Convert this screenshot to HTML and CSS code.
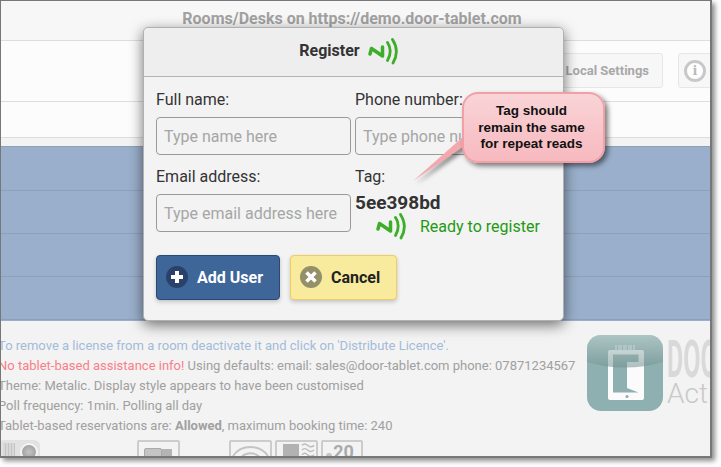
FILE: index.html
```html
<!DOCTYPE html>
<html lang="en">
<head>
    <meta charset="UTF-8">
    <meta name="viewport" content="width=device-width, initial-scale=1.0">
    <title>Register</title>
    <link rel="stylesheet" href="styles.css">
</head>
<body>
    <div class="shot">
        <header class="title-bar">Rooms/Desks on https://demo.door-tablet.com</header>
        <div class="toolbar">
            <span class="tool-btn">Local Settings</span>
            <span class="tool-btn info-btn"><span class="info-icon">i</span></span>
        </div>
        <div class="sub-bar"></div>
        <div class="table">
            <div class="table-row"></div>
            <div class="table-row"></div>
            <div class="table-row"></div>
            <div class="table-row"></div>
        </div>
        <div class="footer">
            <div class="notes">
                <p class="note-blue">To remove a license from a room deactivate it and click on 'Distribute Licence'.</p>
                <p><span class="note-red">No tablet-based assistance info!</span> Using defaults: email: sales@door-tablet.com phone: 07871234567</p>
                <p>Theme: Metalic. Display style appears to have been customised</p>
                <p>Poll frequency: 1min. Polling all day</p>
                <p>Tablet-based reservations are: <strong>Allowed</strong>, maximum booking time: 240</p>
                <div class="status-icons">
                    <span class="status-icon icon-switch"><i class="knob"></i></span>
                    <span class="status-icon icon-cam"><i class="cam-body"></i><i class="cam-lens"></i></span>
                    <span class="status-icon icon-wifi">
                        <svg width="39" height="20" viewBox="0 0 39 20" fill="none" stroke="#c4c4c4" stroke-width="2"><path d="M2 14C10 2 29 2 37 14M8 18C14 9 25 9 31 18"/></svg>
                    </span>
                    <span class="status-icon icon-heat">
                        <i class="heat-block"></i>
                        <svg width="16" height="18" viewBox="0 0 16 18" fill="none" stroke="#bbb" stroke-width="1.5"><path d="M1 3q3-3 6 0t7 0M1 8q3-3 6 0t7 0M1 13q3-3 6 0t7 0"/></svg>
                    </span>
                    <span class="status-icon icon-count"><i class="count-dot"></i>20</span>
                </div>
            </div>
            <div class="logo">
                <div class="logo-tile">
                    <svg width="76" height="76" viewBox="0 0 76 76">
                        <defs>
                            <linearGradient id="gloss" x1="0" y1="0" x2="0" y2="1">
                                <stop offset="0" stop-color="#c4d6d3" stop-opacity="0.55"/>
                                <stop offset="1" stop-color="#6f8f8f" stop-opacity="0.55"/>
                            </linearGradient>
                        </defs>
                        <rect x="21" y="15" width="36" height="50" rx="2" fill="#fbfbfb"/>
                        <path d="M29 10v5q1.500 2 3 0v-5M34 10v5q1.500 2 3 0v-5M39 10v5q1.500 2 3 0v-5M44 10v5q1.500 2 3 0v-5" fill="none" stroke="#f2f2f2" stroke-width="1"/>
                        <path d="M26 19.500H51.500V27H40V53L51.500 57.500H26Z" fill="#8fb0b0"/>
                        <circle cx="40" cy="61.500" r="1.500" fill="#8fb0b0"/>
                        <path d="M0 0H76V27Q38 38 0 27Z" fill="url(#gloss)"/>
                    </svg>
                </div>
                <div class="logo-text">
                    <span class="logo-door">DOOR</span>
                    <span class="logo-act">Activate</span>
                </div>
            </div>
        </div>
    </div>

    <div class="modal">
        <div class="modal-head">
            <span class="modal-title">Register</span>
            <svg class="nfc" width="32" height="27" viewBox="0 0 32 27" fill="none" stroke="#3dae2a" stroke-linecap="round" stroke-linejoin="round"><path d="M3 16L4.500 10.500L15.500 18L15.500 9" stroke-width="3.500"/><path d="M20.500 4.500Q26 13 20.500 22.500" stroke-width="2.800"/><path d="M25.500 1.500Q33 13 26 25" stroke-width="2.800"/></svg>
        </div>
        <form class="modal-body">
            <div class="form-grid">
                <div class="field">
                    <label for="fullName">Full name:</label>
                    <input type="text" id="fullName" placeholder="Type name here">
                </div>
                <div class="field">
                    <label for="phone">Phone number:</label>
                    <input type="text" id="phone" placeholder="Type phone number">
                </div>
                <div class="field">
                    <label for="email">Email address:</label>
                    <input type="text" id="email" placeholder="Type email address here">
                </div>
                <div class="field">
                    <label>Tag:</label>
                    <div class="tag-value">5ee398bd</div>
                    <div class="tag-status">
                        <svg class="nfc" width="32" height="27" viewBox="0 0 32 27" fill="none" stroke="#3dae2a" stroke-linecap="round" stroke-linejoin="round"><path d="M3 16L4.500 10.500L15.500 18L15.500 9" stroke-width="3.500"/><path d="M20.500 4.500Q26 13 20.500 22.500" stroke-width="2.800"/><path d="M25.500 1.500Q33 13 26 25" stroke-width="2.800"/></svg>
                        <span>Ready to register</span>
                    </div>
                </div>
            </div>
            <div class="actions">
                <button type="button" class="btn btn-add">
                    <svg class="btn-icon" width="22" height="22" viewBox="0 0 22 22"><circle cx="11" cy="11" r="11" fill="#2a426b"/><path d="M11 5v12M5 11h12" stroke="#fff" stroke-width="4"/></svg>
                    Add User
                </button>
                <button type="button" class="btn btn-cancel">
                    <svg class="btn-icon" width="22" height="22" viewBox="0 0 22 22"><circle cx="11" cy="11" r="11" fill="#94906a"/><path d="M6.500 6.500l9 9M15.500 6.500l-9 9" stroke="#fff" stroke-width="3.600"/></svg>
                    Cancel
                </button>
            </div>
        </form>
    </div>

    <div class="callout">
        <svg class="callout-tail" width="90" height="100" viewBox="0 0 90 100">
            <path d="M56 40.600L1 89L56 51.600Z" fill="#f4a8ae"/>
        </svg>
        <div class="callout-box">Tag should<br>remain the same<br>for repeat reads</div>
    </div>
</body>
</html>
```

FILE: styles.css
```css
* {
    box-sizing: border-box;
}
html, body {
    margin: 0;
    padding: 0;
}
body {
    width: 721px;
    height: 467px;
    overflow: hidden;
    position: relative;
    font-family: Roboto, Arial, sans-serif;
    background: #fff;
}
.shot {
    width: 712px;
    height: 458px;
    border: 1px solid #777;
    border-width: 1px 2px 2px 1px;
    overflow: hidden;
    background: #f3f3f3;
    box-shadow: 3px 3px 5px rgba(0, 0, 0, 0.45);
}
.title-bar {
    height: 40px;
    padding-top: 8px;
    padding-right: 7px;
    text-align: center;
    font-size: 16px;
    font-weight: 700;
    line-height: 19px;
    color: #a2a2a2;
    background: #f7f7f7;
    border-bottom: 1px solid #ddd;
}
.toolbar {
    height: 61px;
    padding: 12px 0 0;
    display: flex;
    justify-content: flex-end;
    gap: 15px;
    margin-right: -18px;
    background: #fcfcfc;
    border-bottom: 1px solid #ddd;
}
.tool-btn {
    height: 35px;
    padding: 0 13px 0 120px;
    display: flex;
    align-items: center;
    font-size: 13px;
    font-weight: 700;
    color: #a8a8a8;
    background: #f7f7f7;
    border: 1px solid #e6e6e6;
    border-radius: 3px;
}
.info-btn {
    width: 50px;
    padding: 0 0 0 5px;
}
.info-icon {
    width: 22px;
    height: 22px;
    display: block;
    text-align: center;
    font-family: "DejaVu Serif", serif;
    font-size: 13px;
    line-height: 16px;
    color: #bbb;
    background: #fff;
    border: 3px solid #c8c8c8;
    border-radius: 50%;
}
.sub-bar {
    height: 36px;
    background: #fcfcfc;
    border-bottom: 1px solid #ddd;
}
.table {
    margin-top: 8px;
    height: 175px;
    background: #9aafcb;
    border-top: 1px solid #8ba1b5;
}
.table-row {
    height: 43px;
    border-bottom: 1px solid #8ba1b5;
}
.table-row:first-child {
    height: 44px;
}
.footer {
    display: flex;
    padding-top: 15px;
    position: relative;
}
.notes {
    width: 586px;
    margin-left: -3px;
    font-size: 13px;
    line-height: 20px;
    color: #a0a0a0;
}
.notes p {
    margin: 0;
    white-space: nowrap;
}
.note-blue {
    color: #a3bbd9;
}
.note-red {
    color: #f97f86;
}
.status-icons {
    display: flex;
    margin-top: 4px;
    height: 30px;
}
.status-icon {
    display: block;
    height: 30px;
    flex: none;
    border: 2px solid #ccc;
    border-radius: 2px;
    position: relative;
}
.icon-switch {
    width: 42px;
    border: none;
    border-radius: 6px;
    background: repeating-linear-gradient(90deg, #d8d8d8 0 2px, #c4c4c4 2px 3px) 5px 3px / 12px 20px no-repeat, #e2e2e2;
}
.knob {
    position: absolute;
    left: 22px;
    top: 3px;
    width: 18px;
    height: 18px;
    border-radius: 50%;
    background: radial-gradient(#c4c4c4, #959595);
    border: 2px solid #f4f4f4;
}
.icon-cam {
    width: 43px;
    margin-left: 97px;
}
.cam-body {
    position: absolute;
    left: 5px;
    top: 6px;
    width: 18px;
    height: 10px;
    background: #c4c4c4;
    border: 1px solid #aaa;
    border-radius: 2px;
}
.cam-lens {
    position: absolute;
    left: 23px;
    top: 7px;
    width: 10px;
    height: 12px;
    background: #b4b4b4;
}
.icon-wifi {
    width: 43px;
    margin-left: 49px;
}
.icon-heat {
    width: 43px;
    margin-left: 3px;
    display: flex;
    padding-left: 3px;
}
.heat-block {
    display: block;
    width: 17px;
    height: 20px;
    margin: 2px 2px 0 3px;
    background: #b2b2b2;
}
.icon-count {
    width: 42px;
    margin-left: 3px;
    padding-left: 3px;
    text-align: center;
    font-size: 18px;
    font-weight: 700;
    line-height: 19px;
    color: #aaa;
}
.count-dot {
    position: absolute;
    left: 3px;
    top: 11px;
    width: 6px;
    height: 6px;
    border-radius: 50%;
    background: #c4c4c4;
}
.logo {
    position: absolute;
    left: 586px;
    top: 14px;
    display: flex;
}
.logo-tile {
    width: 76px;
    height: 76px;
    flex: none;
    overflow: hidden;
    border-radius: 14px;
    background: #8fb0b0;
}
.logo-tile svg {
    display: block;
}
.logo-text {
    margin-left: 4px;
    white-space: nowrap;
}
.logo-door {
    display: block;
    height: 48px;
    padding-top: 2px;
    font-size: 52px;
    font-weight: 700;
    line-height: 46px;
    color: #d9d9d9;
    transform: scaleX(0.48);
    transform-origin: 0 0;
}
.logo-act {
    display: block;
    font-size: 28px;
    font-weight: 300;
    line-height: 21px;
    color: #c9c9c9;
}

.modal {
    position: absolute;
    left: 143px;
    top: 27px;
    width: 421px;
    height: 294px;
    background: #f3f3f3;
    border: 1px solid #b0b0b0;
    border-radius: 5px;
    box-shadow: 0 4px 14px rgba(0, 0, 0, 0.55);
}
.modal-head {
    height: 49px;
    display: flex;
    align-items: center;
    justify-content: center;
    gap: 7px;
    padding-right: 9px;
    padding-bottom: 2px;
    font-size: 16px;
    font-weight: 700;
    color: #333;
    background: #eee;
    border-bottom: 1px solid #b4b4b4;
    border-radius: 5px 5px 0 0;
}
.modal-title {
    padding-bottom: 2px;
}
.modal-body {
    padding: 12px 12px 0;
}
.form-grid {
    display: grid;
    grid-template-columns: 195px 195px;
    column-gap: 4px;
}
.field {
    height: 77px;
}
.field label {
    display: block;
    height: 28px;
    font-size: 16px;
    line-height: 22px;
    color: #333;
}
.field input {
    display: block;
    width: 195px;
    height: 38px;
    padding: 0 7px;
    font-family: Roboto, Arial, sans-serif;
    font-size: 16px;
    color: #333;
    background: #f3f3f3;
    border: 1px solid #9a9a9a;
    border-radius: 4px;
}
.field input::placeholder {
    color: #a6a6a6;
    opacity: 1;
}
.tag-value {
    margin-top: -1px;
    font-size: 19px;
    font-weight: 700;
    line-height: 20px;
    color: #333;
}
.tag-status {
    display: flex;
    align-items: center;
    gap: 13px;
    margin-top: 0;
    padding-left: 20px;
    font-size: 16px;
    color: #1f9a12;
    white-space: nowrap;
}
.actions {
    display: flex;
    gap: 10px;
    margin-top: 12px;
}
.btn {
    height: 45px;
    display: flex;
    align-items: center;
    padding: 0 9px 1px;
    font-family: Roboto, Arial, sans-serif;
    font-size: 16px;
    font-weight: 700;
    border-radius: 4px;
    box-shadow: 0 2px 4px rgba(0, 0, 0, 0.2);
}
.btn-add {
    width: 124px;
    color: #fff;
    background: #3e6699;
    border: 1px solid #2a4a75;
}
.btn-cancel {
    width: 107px;
    color: #222;
    background: #f8eb9d;
    border: 1px solid #f0cd63;
}
.btn-icon {
    margin-right: 9px;
    flex: none;
}

.callout {
    position: absolute;
    left: 412px;
    top: 92px;
    width: 210px;
    height: 100px;
}
.callout-box {
    position: absolute;
    left: 50px;
    top: 0;
    width: 143px;
    height: 71px;
    padding: 9px 4px 0 0;
    text-align: center;
    font-family: "Liberation Sans", Arial, sans-serif;
    font-size: 13.5px;
    font-weight: 700;
    line-height: 16.5px;
    color: #111;
    background: linear-gradient(#f9d4d7, #f7b9bf);
    border: 2px solid #f2a0a8;
    border-radius: 16px;
    box-shadow: 3px 3px 5px rgba(0, 0, 0, 0.5);
}
.callout-tail {
    position: absolute;
    left: 0;
    top: 0;
    filter: drop-shadow(3px 3px 2px rgba(0, 0, 0, 0.45));
}
```
